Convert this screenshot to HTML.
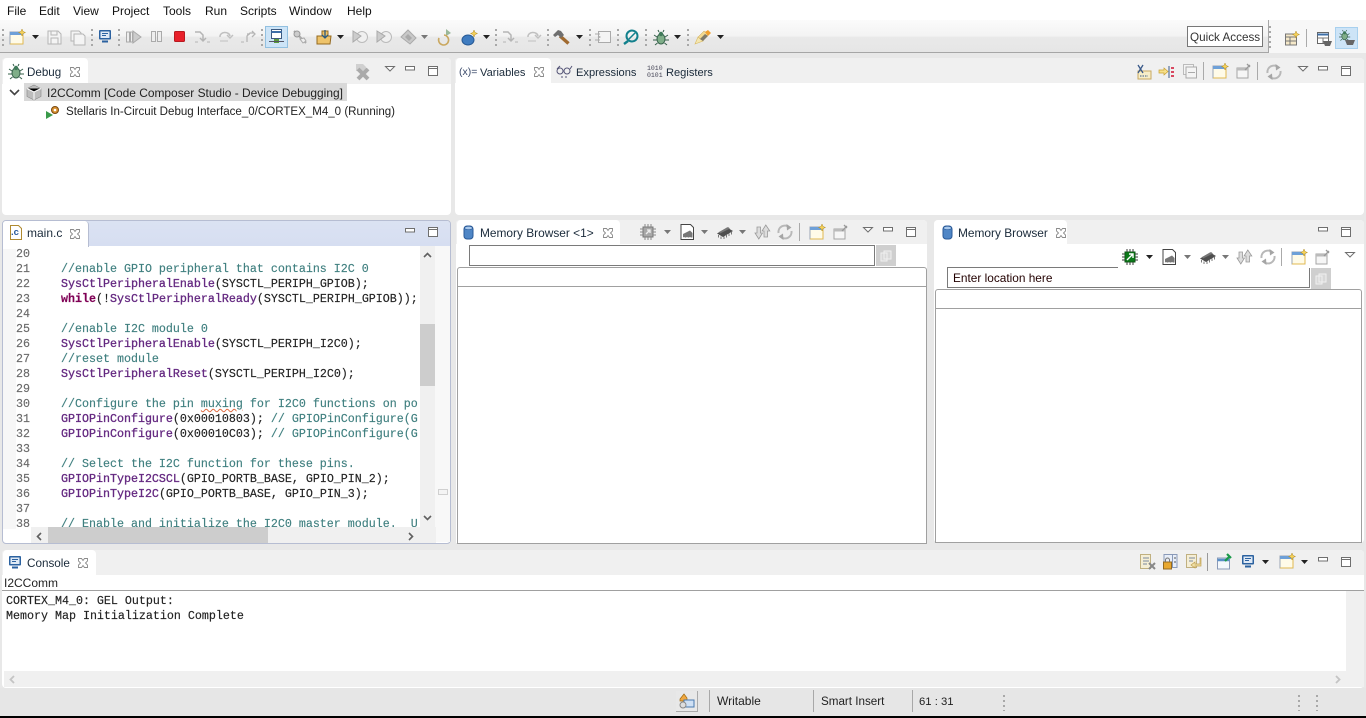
<!DOCTYPE html>
<html><head><meta charset="utf-8"><title>Code Composer Studio</title>
<style>
html,body{margin:0;padding:0}
body{width:1366px;height:718px;position:relative;overflow:hidden;background:#e8e8e8;font:12px/16px "Liberation Sans",sans-serif;color:#111}
.a,svg,.t{position:absolute}
.t{white-space:nowrap}
svg{overflow:visible}
.m{position:absolute;top:3px;font-size:12px;color:#111}
.grip{position:absolute;width:2px;background:repeating-linear-gradient(#a8a8a8 0 2px,transparent 2px 5px)}
.panel{position:absolute;background:#fff;border-radius:4px}
.hd{position:absolute;left:0;right:0;top:0;height:25px;background:#f0f0f0;border-radius:4px 4px 0 0}
.tab{position:absolute;top:0;height:26px;background:#fff;border-radius:4px 4px 0 0}
.code{position:absolute;font:11.67px/15px "Liberation Mono",monospace;white-space:pre;color:#222;-webkit-text-stroke:.15px currentColor}
.c{color:#3f7f7f}.f{color:#642880;-webkit-text-stroke:.3px #642880}.k{color:#7f0055;font-weight:bold}
.tb{font-size:11.1px;color:#1a2a3a}
</style></head><body>
<svg width="0" height="0" style="position:absolute"><defs>
<g id="x"><path d="M1.500 1.500l3 0 1.500 2 1.500-2 3 0 0 2.500-2 2 2 2 0 2.500-3 0-1.500-2-1.500 2-3 0 0-2.500 2-2-2-2z" fill="#fff" stroke="#8a8a8a" stroke-width=".9"/></g>
<g id="min"><rect x=".5" y=".5" width="9" height="3.500" fill="#fff" stroke="#6f6f6f"/></g>
<g id="max"><rect x=".5" y=".5" width="9" height="9" fill="#fff" stroke="#6f6f6f"/><path d="M.5 2.500h9" stroke="#6f6f6f"/></g>
<g id="menu"><path d="M.5.5h9l-4.500 4.500z" fill="#fff" stroke="#6f6f6f"/></g>
<g id="dd"><path d="M0 0h7l-3.500 4z" fill="#222"/></g>
<g id="ddg"><path d="M0 0h7l-3.500 4z" fill="#777"/></g>
<g id="mon"><rect x="1" y="1" width="12" height="9.500" rx="1" fill="#2c62a0"/><rect x="2.500" y="2.500" width="9" height="6.500" fill="#dfe9f5"/><path d="M4 4.500h6M4 6.500h4" stroke="#2c62a0"/><path d="M4 12.500h6" stroke="#2c62a0" stroke-width="2"/></g>
<g id="newv"><rect x="1" y="3" width="13" height="12" fill="#fffbe8" stroke="#9aa5b5"/><rect x="1" y="3" width="13" height="3" fill="#6ea0d8"/><path d="M14 15V6M1 15h13" stroke="#e0b850"/><path d="M13 0l1 2.500 2.500 1-2.500 1-1 2.500-1-2.500-2.500-1 2.500-1z" fill="#f7d35a" stroke="#b08a20" stroke-width=".5"/></g>
<g id="pin"><rect x="1" y="5" width="11" height="10" fill="#f6f6f6" stroke="#a5a5a5"/><rect x="1" y="5" width="11" height="2.500" fill="#bbb"/><path d="M9 7l5-5M11 1l3 3" stroke="#999" stroke-width="1.300"/></g>
<g id="sync"><path d="M1.500 9a6.500 6.500 0 0 1 10.500-6M14.500 7a6.500 6.500 0 0 1-10.500 6" fill="none" stroke="#b8b8b8" stroke-width="2"/><path d="M9.500 0l5 3.500-4.500 3zM6.500 16l-5-3.500 4.500-3z" fill="#a5a5a5"/></g>
<g id="updown"><path d="M3 9V3h3.500v6h2L4.800 15 1 9zM10 7v6h3.500V7h2.300L11.800 1 8 7z" fill="#ddd" stroke="#999" stroke-width=".8"/></g>
<g id="chip"><rect x="3" y="3" width="10" height="10" fill="#a8a8a8" stroke="#777"/><path d="M0 5h3M0 8h3M0 11h3M13 5h3M13 8h3M13 11h3M5 0v3M8 0v3M11 0v3M5 13v3M8 13v3M11 13v3" stroke="#888"/><path d="M6 10l4-4M7 6h3v3" stroke="#eee" fill="none" stroke-width="1.300"/></g>
<g id="chip2"><rect x="3" y="3" width="10" height="10" fill="#0c7a1a" stroke="#0a5a12"/><path d="M0 5h3M0 8h3M0 11h3M13 5h3M13 8h3M13 11h3M5 0v3M8 0v3M11 0v3M5 13v3M8 13v3M11 13v3" stroke="#3a3a3a"/><path d="M5 11l6-6M7 5h4v4" stroke="#fff" fill="none" stroke-width="1.400"/></g>
<g id="doc"><path d="M1 .5h9.500l3 3V15.500H1z" fill="#fff" stroke="#444"/><path d="M3 10l7-3.500 2.500 2.500v4.500H3z" fill="#777"/><path d="M4 13v2M7 13v2M10 13v2" stroke="#fff"/></g>
<g id="ram"><path d="M0 9.500l10-6 6 3.500-10 6z" fill="#4f4f4f"/><path d="M2 8l9-5 2 1.500-10 5z" fill="#777"/><path d="M1.500 11v2.500M4 12.500V15M7 12.500V15M9.500 11v2.500M12 9.500V12M14.500 8v2.500" stroke="#777"/></g>
<g id="bug"><ellipse cx="8" cy="9" rx="4" ry="5" fill="#7fae88" stroke="#35604a"/><circle cx="8" cy="4" r="2.200" fill="#3f7a5a"/><path d="M4 7L1 5M4 10H0M4.500 13L2 15M12 7l3-2M12 10h4M11.500 13l2.500 2M6 2L5 0M10 2l1-2" stroke="#35604a"/></g>
<g id="mem"><rect x="2" y="1" width="9" height="13" rx="3" fill="#4f86c6" stroke="#2a5a98"/><ellipse cx="6.500" cy="3" rx="4" ry="1.700" fill="#a8c8ec" stroke="#2a5a98" stroke-width=".6"/></g>
</defs></svg>

<!-- top -->
<div class="a" style="left:0;top:0;width:1366px;height:20px;background:#fff"></div>
<div class="m" style="left:7px">File</div><div class="m" style="left:39px">Edit</div><div class="m" style="left:73px">View</div><div class="m" style="left:112px">Project</div><div class="m" style="left:163px">Tools</div><div class="m" style="left:205px">Run</div><div class="m" style="left:240px">Scripts</div><div class="m" style="left:289px">Window</div><div class="m" style="left:347px">Help</div>
<div class="a" style="left:0;top:20px;width:1268px;height:32px;background:linear-gradient(#fbfbfb 0,#f3f3f3 50%,#e9e9e9 54%,#e6e6e6 100%)"></div>
<div class="a" style="left:0;top:52px;width:1268px;height:1px;background:#a6a6a6"></div>
<div class="a" style="left:1268px;top:20px;width:98px;height:33px;background:#f7f7f7"></div>
<div class="a" style="left:1268px;top:20px;width:1px;height:33px;background:#a6a6a6"></div>

<!-- toolbar icons -->
<div class="grip" style="left:2px;top:29px;height:17px"></div>
<svg style="left:9px;top:29px" width="18" height="17"><use href="#newv"/></svg><svg style="left:32px;top:35px" width="8" height="5"><use href="#dd"/></svg>
<svg style="left:47px;top:30px" width="15" height="15"><path d="M1 1h10l3 3v10H1z" fill="#f4f4f4" stroke="#b5b5b5"/><path d="M4 1v4h6V1M4 14V8h7v6" fill="none" stroke="#b5b5b5"/></svg>
<svg style="left:70px;top:30px" width="16" height="16"><path d="M1 1h8l2 2v8H1z" fill="#f4f4f4" stroke="#b5b5b5"/><path d="M4 4h9l2 2v9H4z" fill="#f4f4f4" stroke="#b5b5b5"/></svg>
<div class="grip" style="left:91px;top:29px;height:17px"></div>
<svg style="left:98px;top:29px" width="14" height="15"><use href="#mon"/></svg>
<div class="grip" style="left:118px;top:29px;height:17px"></div>
<svg style="left:126px;top:31px" width="16" height="13"><rect x=".5" y="1" width="3" height="10" fill="#eee" stroke="#aaa"/><rect x="4.500" y="1" width="2" height="10" fill="#eee" stroke="#aaa"/><path d="M7 0l8 6-8 6z" fill="#ccc" stroke="#aaa"/></svg>
<svg style="left:151px;top:31px" width="12" height="13"><rect x=".5" y=".5" width="4" height="10" fill="#eee" stroke="#aaa"/><rect x="6.500" y=".5" width="4" height="10" fill="#eee" stroke="#aaa"/></svg>
<svg style="left:174px;top:31px" width="12" height="13"><rect x=".5" y=".5" width="10" height="10" rx="1" fill="#e8202a" stroke="#b81a20"/></svg>
<svg style="left:195px;top:31px" width="16" height="13"><path d="M0 1h5l3 3v5M5 7l3 3 3-3" fill="none" stroke="#b5b5b5" stroke-width="1.500"/><path d="M0 11h3M12 11h3" stroke="#b5b5b5"/></svg>
<svg style="left:218px;top:31px" width="16" height="13"><path d="M2 6a5 4 0 0 1 10-1M9 4l3 3 3-3" fill="none" stroke="#c0c0c0" stroke-width="1.500"/><path d="M2 10h8" stroke="#c0c0c0"/></svg>
<svg style="left:241px;top:31px" width="16" height="13"><path d="M6 11V5l3-3h4M6 3l3 0M11 0l3 3-3 3" fill="none" stroke="#b5b5b5" stroke-width="1.300"/><path d="M0 11h3" stroke="#b5b5b5"/></svg>
<div class="grip" style="left:261px;top:29px;height:17px"></div>
<div class="a" style="left:265px;top:26px;width:21px;height:20px;background:#cde4f7;border:1px solid #92c0e0"></div>
<svg style="left:269px;top:29px" width="16" height="16"><rect x="2.500" y=".5" width="10" height="9" fill="#fff" stroke="#3d5a80"/><path d="M2.500 3h10" stroke="#3d6fa8" stroke-width="2"/><rect x="5" y="10" width="5" height="4" fill="#5a9a3a"/><path d="M0 12.500h15" stroke="#556"/></svg>
<svg style="left:292px;top:29px" width="16" height="16"><path d="M2 2l7 7M9 9l5 5" stroke="#aaa" stroke-width="2"/><circle cx="5" cy="5" r="3" fill="#ccc" stroke="#999"/><path d="M8 10l4-1 2 3-3 2z" fill="#eee" stroke="#aaa"/></svg>
<svg style="left:316px;top:29px" width="17" height="16"><path d="M1 7h5V2h6v5h3l-1 8H1z" fill="#eec36a" stroke="#946a20"/><path d="M9 1v8M6 6l3 3 3-3" stroke="#2a5a80" stroke-width="1.300" fill="none"/></svg>
<svg style="left:337px;top:35px" width="8" height="5"><use href="#dd"/></svg>
<svg style="left:352px;top:29px" width="16" height="16"><circle cx="10" cy="8" r="5.500" fill="#f0f0f0" stroke="#bbb"/><path d="M1 2l8 5-8 6z" fill="#ccc" stroke="#aaa"/></svg>
<svg style="left:376px;top:29px" width="16" height="16"><circle cx="10" cy="8" r="5.500" fill="#f0f0f0" stroke="#bbb"/><path d="M1 2l8 5-8 6z" fill="#ccc" stroke="#aaa"/></svg>
<svg style="left:400px;top:29px" width="17" height="16"><path d="M1 8l7-7 8 8-6 6z" fill="#c8c8c8" stroke="#aaa"/><path d="M5 8l3-3 4 4-3 3z" fill="#aaa"/></svg>
<svg style="left:421px;top:35px" width="8" height="5"><use href="#ddg"/></svg>
<svg style="left:437px;top:29px" width="16" height="16"><path d="M9 0l5 4-5 3z" fill="#9ab89a"/><path d="M2 9a5 5 0 1 0 5-3" fill="none" stroke="#caa860" stroke-width="1.600"/></svg>
<svg style="left:461px;top:30px" width="17" height="16"><ellipse cx="7" cy="10" rx="6" ry="5" fill="#3f7cc0" stroke="#275a95"/><path d="M13 0l1 2.500 2.500 1-2.500 1-1 2.500-1-2.500-2.500-1 2.500-1z" fill="#f7d35a" stroke="#b08a20" stroke-width=".5"/></svg>
<svg style="left:483px;top:35px" width="8" height="5"><use href="#dd"/></svg>
<div class="grip" style="left:495px;top:29px;height:17px"></div>
<svg style="left:503px;top:31px" width="16" height="13"><path d="M0 1h5l3 3v5M5 7l3 3 3-3" fill="none" stroke="#b5b5b5" stroke-width="1.500"/><path d="M0 11h3M12 11h3" stroke="#b5b5b5"/></svg>
<svg style="left:526px;top:31px" width="16" height="13"><path d="M2 6a5 4 0 0 1 10-1M9 4l3 3 3-3" fill="none" stroke="#c0c0c0" stroke-width="1.500"/><path d="M2 10h8" stroke="#c0c0c0"/></svg>
<div class="grip" style="left:547px;top:29px;height:17px"></div>
<svg style="left:553px;top:30px" width="17" height="15"><path d="M7 6l8.500 7.500" stroke="#a06a30" stroke-width="3.400"/><path d="M0 5l5-5 3 1 3 4-3 3-3-3-3 2z" fill="#6f6f6f"/></svg>
<svg style="left:576px;top:35px" width="8" height="5"><use href="#dd"/></svg>
<div class="grip" style="left:589px;top:29px;height:17px"></div>
<svg style="left:595px;top:31px" width="16" height="13"><rect x="3.500" y=".5" width="12" height="11" fill="#f4f4f4" stroke="#aaa"/><path d="M0 3h5M0 9h5M3 5l2 1-2 1" stroke="#aaa" fill="none"/></svg>
<div class="grip" style="left:617px;top:29px;height:17px"></div>
<svg style="left:623px;top:29px" width="16" height="16"><circle cx="9" cy="7" r="5.500" fill="none" stroke="#12808c" stroke-width="2"/><path d="M5 12l-4 3" stroke="#12808c" stroke-width="2.400"/><path d="M6 10l6-6" stroke="#12808c" stroke-width="1.500"/></svg>
<div class="grip" style="left:645px;top:29px;height:17px"></div>
<svg style="left:653px;top:30px" width="16" height="16"><use href="#bug"/></svg>
<svg style="left:674px;top:35px" width="8" height="5"><use href="#dd"/></svg>
<div class="grip" style="left:687px;top:29px;height:17px"></div>
<svg style="left:695px;top:30px" width="17" height="15"><path d="M0 14l3-7 5 4z" fill="#f5e7b0" stroke="#d8b860" stroke-width=".6"/><path d="M3 7l6-6 4 3-5 7z" fill="#f2d990" stroke="#c8a860" stroke-width=".5"/><path d="M5 9l5-5 3 2-5 5z" fill="#7f7a6a"/><path d="M10 2l3-2 3 3-3 3z" fill="#f0a030"/></svg>
<svg style="left:717px;top:35px" width="8" height="5"><use href="#dd"/></svg>

<div class="a" style="left:1187px;top:26px;width:74px;height:19px;border:1px solid #777;background:#fff;box-sizing:content-box"></div>
<div class="t" style="left:1190px;top:30px;color:#333;font-size:11.7px">Quick Access</div>
<div class="grip" style="left:1269px;top:26px;height:22px"></div>
<svg style="left:1285px;top:31px" width="16" height="15"><rect x=".5" y="3" width="11" height="11" fill="#f5e8c8" stroke="#777"/><path d="M.5 6h11M.5 10h11M5 6v8" stroke="#777"/><path d="M11 0l1 2.500 2.500 1-2.500 1-1 2.500-1-2.500-2.500-1 2.500-1z" fill="#f7d35a" stroke="#b08a20" stroke-width=".5"/></svg>
<div class="a" style="left:1306px;top:29px;width:1px;height:18px;background:#aaa"></div>
<svg style="left:1317px;top:32px" width="16" height="15"><rect x=".5" y=".5" width="11" height="11" fill="#fff" stroke="#666"/><path d="M.5 2.500h11" stroke="#3d6fa8" stroke-width="2"/><path d="M.5 6h11M6 6v5" stroke="#777"/><path d="M6 9h9l-2 5H8z" fill="#666"/></svg>
<div class="a" style="left:1335px;top:27px;width:21px;height:20px;background:#cde4f7;border:1px solid #a8d0ee"></div>
<svg style="left:1339px;top:30px" width="18" height="17"><g transform="scale(.7)"><use href="#bug"/></g><path d="M6 10h10l-2 5H8z" fill="#666"/></svg>

<!-- Debug panel -->
<div class="panel" style="left:2px;top:58px;width:449px;height:157px;border-radius:4px"><div class="hd" style="height:26px"></div>
<div class="tab" style="left:1px;width:85px;height:27px"></div></div>
<svg style="left:8px;top:64px" width="16" height="16"><use href="#bug"/></svg>
<div class="t" style="left:27px;top:65px;color:#1a2a3a;font-size:11.6px">Debug</div>
<svg style="left:69px;top:66px" width="12" height="12"><use href="#x"/></svg>
<svg style="left:354px;top:63px" width="17" height="17"><path d="M2 1h7l3 3v4H2z" fill="#d0d0d0"/><path d="M4 6l10 10M14 6L4 16" stroke="#aaa" stroke-width="4"/></svg>
<svg style="left:385px;top:66px" width="10" height="6"><use href="#menu"/></svg>
<svg style="left:405px;top:66px" width="11" height="5"><use href="#min"/></svg>
<svg style="left:428px;top:66px" width="11" height="11"><use href="#max"/></svg>
<div class="a" style="left:24px;top:83px;width:323px;height:18px;background:#d9d9d9"></div>
<svg style="left:9px;top:89px" width="11" height="7"><path d="M1 1l4.500 4.500L10 1" fill="none" stroke="#444" stroke-width="1.600"/></svg>
<svg style="left:26px;top:85px" width="16" height="15"><path d="M8 0l7 3.500v8L8 15l-7-3.500v-8z" fill="#bdbdbd" stroke="#888" stroke-width=".6"/><path d="M1 3.500L8 7l7-3.500M8 7v8" stroke="#fff"/></svg>
<div class="t" style="left:47px;top:85px;font-size:11.95px;color:#222">I2CComm [Code Composer Studio - Device Debugging]</div>
<svg style="left:46px;top:105px" width="16" height="15"><path d="M0 6l7 4-7 4z" fill="#3a9a4a"/><circle cx="9" cy="5" r="3.500" fill="#d89030" stroke="#7a4a10"/><circle cx="9" cy="5" r="1.300" fill="#fff"/></svg>
<div class="t" style="left:66px;top:104px;font-size:11.55px;color:#222">Stellaris In-Circuit Debug Interface_0/CORTEX_M4_0 (Running)</div>

<!-- Variables panel -->
<div class="panel" style="left:455px;top:58px;width:909px;height:157px"><div class="hd" style="height:25px"></div>
<div class="tab" style="left:1px;width:95px"></div></div>
<div class="t" style="left:459px;top:64px;font-size:10.5px;color:#3a4a6a">(x)=</div>
<div class="t tb" style="left:480px;top:65px">Variables</div>
<svg style="left:533px;top:66px" width="12" height="12"><use href="#x"/></svg>
<svg style="left:556px;top:64px" width="16" height="16"><circle cx="4" cy="7" r="3" fill="none" stroke="#557"/><circle cx="11" cy="7" r="3" fill="none" stroke="#557"/><path d="M7 7h1M14 5l2-3M1 5l3-3" stroke="#557"/><path d="M5 13h2M9 13h2" stroke="#557"/></svg>
<div class="t tb" style="left:576px;top:65px">Expressions</div>
<div class="t" style="left:647px;top:66px;font:6.5px/6.5px 'Liberation Mono',monospace;color:#445;white-space:normal;width:16px">1010 0101</div>
<div class="t tb" style="left:666px;top:65px">Registers</div>
<svg style="left:1135px;top:64px" width="17" height="16"><path d="M3 7h13v8H3z" fill="#f7eec8" stroke="#c8a860"/><path d="M3 1l5 8M8 1L3 9" stroke="#3a5a8a" stroke-width="1.300"/><path d="M5 12h8" stroke="#3a5a8a" stroke-dasharray="1.500 1"/></svg>
<svg style="left:1158px;top:64px" width="17" height="16"><path d="M1 6h5V4l4 3.500-4 3.500V9H1z" fill="#f7e08a" stroke="#c8a030" stroke-width=".7"/><path d="M11 2v12" stroke="#3a5a8a"/><path d="M13 4h3M13 8h3M13 12h3" stroke="#d84860" stroke-width="2"/></svg>
<svg style="left:1183px;top:64px" width="14" height="15"><rect x=".5" y=".5" width="10" height="10" fill="#f4f4f4" stroke="#bbb"/><rect x="3" y="3" width="10.500" height="11" fill="#f4f4f4" stroke="#aaa"/><path d="M5 8.500h7" stroke="#aaa"/></svg>
<div class="a" style="left:1203px;top:62px;width:1px;height:18px;background:#aaa"></div>
<svg style="left:1212px;top:63px" width="17" height="17"><use href="#newv"/></svg>
<svg style="left:1236px;top:63px" width="16" height="16"><use href="#pin"/></svg>
<div class="a" style="left:1257px;top:62px;width:1px;height:18px;background:#aaa"></div>
<svg style="left:1266px;top:64px" width="16" height="16"><use href="#sync"/></svg>
<svg style="left:1298px;top:66px" width="10" height="6"><use href="#menu"/></svg>
<svg style="left:1318px;top:66px" width="11" height="5"><use href="#min"/></svg>
<svg style="left:1341px;top:66px" width="11" height="11"><use href="#max"/></svg>

<!-- main.c -->
<div class="panel" style="left:2px;top:220px;width:447px;height:322px;border:1px solid #b6bdd2;border-radius:4px;overflow:hidden">
<div class="a" style="left:0;top:0;width:447px;height:25px;background:linear-gradient(#dbe2f2,#d6def1)"></div>
<div class="a" style="left:86px;top:25px;width:361px;height:4px;background:#fff"></div>
<div class="a" style="left:0;top:0;width:85px;height:26px;background:#fff;border-radius:0 4px 0 0;border-right:1px solid #b6bdd2"></div>
<div class="a" style="left:0;top:28px;width:13px;height:280px;background:#f7f7f7"></div>
</div>
<svg style="left:10px;top:225px" width="12" height="15"><path d="M.5.5h8l3 3v11h-11z" fill="#fff" stroke="#b08a30"/></svg>
<div class="t" style="left:11px;top:227px;font:bold 9.5px/12px 'Liberation Sans',sans-serif;color:#2a5a9a">.c</div>
<div class="t" style="left:27px;top:225px;font-size:12px;color:#1a2a3a">main.c</div>
<svg style="left:69px;top:228px" width="12" height="12"><use href="#x"/></svg>
<svg style="left:405px;top:228px" width="11" height="5"><use href="#min"/></svg>
<svg style="left:428px;top:227px" width="11" height="11"><use href="#max"/></svg>
<div class="a" style="left:16px;top:246px;width:404px;height:281px;overflow:hidden">
<div class="code" style="left:0;top:1px;color:#6a6a6a">20
21
22
23
24
25
26
27
28
29
30
31
32
33
34
35
36
37
38</div>
<div class="code" style="left:45px;top:1px;width:360px;overflow:hidden">
<span class="c">//enable GPIO peripheral that contains I2C 0</span>
<span class="f">SysCtlPeripheralEnable</span>(SYSCTL_PERIPH_GPIOB);
<span class="k">while</span>(!<span class="f">SysCtlPeripheralReady</span>(SYSCTL_PERIPH_GPIOB));

<span class="c">//enable I2C module 0</span>
<span class="f">SysCtlPeripheralEnable</span>(SYSCTL_PERIPH_I2C0);
<span class="c">//reset module</span>
<span class="f">SysCtlPeripheralReset</span>(SYSCTL_PERIPH_I2C0);

<span class="c">//Configure the pin <span style="text-decoration:underline wavy #e06a40 1px">muxing</span> for I2C0 functions on po</span>
<span class="f">GPIOPinConfigure</span>(0x00010803); <span class="c">// GPIOPinConfigure(G</span>
<span class="f">GPIOPinConfigure</span>(0x00010C03); <span class="c">// GPIOPinConfigure(G</span>

<span class="c">// Select the I2C function for these pins.</span>
<span class="f">GPIOPinTypeI2CSCL</span>(GPIO_PORTB_BASE, GPIO_PIN_2);
<span class="f">GPIOPinTypeI2C</span>(GPIO_PORTB_BASE, GPIO_PIN_3);

<span class="c">// Enable and initialize the I2C0 master module.  U</span></div>
</div>
<div class="a" style="left:420px;top:246px;width:15px;height:281px;background:#f0f0f0"></div>
<div class="a" style="left:420px;top:324px;width:15px;height:62px;background:#cdcdcd"></div>
<div class="a" style="left:435px;top:246px;width:15px;height:296px;background:#f8f8f8"></div>
<svg style="left:423px;top:252px" width="9" height="6"><path d="M1 5l3.500-3.500L8 5" fill="none" stroke="#606060" stroke-width="1.600"/></svg>
<svg style="left:423px;top:515px" width="9" height="6"><path d="M1 1l3.500 3.500L8 1" fill="none" stroke="#606060" stroke-width="1.600"/></svg>
<div class="a" style="left:438px;top:489px;width:8px;height:4px;border:1px solid #d0d0d0;background:#f4f4f4"></div>
<div class="a" style="left:31px;top:527px;width:405px;height:16px;background:#f0f0f0"></div>
<div class="a" style="left:48px;top:527px;width:220px;height:16px;background:#cdcdcd"></div>
<svg style="left:36px;top:532px" width="6" height="9"><path d="M5 1L1.500 4.500 5 8" fill="none" stroke="#606060" stroke-width="1.600"/></svg>
<svg style="left:408px;top:532px" width="6" height="9"><path d="M1 1l3.500 3.500L1 8" fill="none" stroke="#606060" stroke-width="1.600"/></svg>

<!-- Memory 1 -->
<div class="panel" style="left:456px;top:220px;width:471px;height:323px;border-radius:4px 4px 0 0"><div class="hd" style="height:24px"></div>
<div class="tab" style="left:1px;width:163px;height:25px"></div></div>
<svg style="left:462px;top:225px" width="13" height="15"><use href="#mem"/></svg>
<div class="t tb" style="left:480px;top:225px;font-size:11.9px">Memory Browser &lt;1&gt;</div>
<svg style="left:602px;top:227px" width="12" height="12"><use href="#x"/></svg>
<svg style="left:640px;top:224px" width="16" height="16"><use href="#chip"/></svg>
<svg style="left:664px;top:230px" width="8" height="5"><use href="#ddg"/></svg>
<svg style="left:680px;top:224px" width="15" height="16"><use href="#doc"/></svg>
<svg style="left:701px;top:230px" width="8" height="5"><use href="#ddg"/></svg>
<svg style="left:717px;top:224px" width="16" height="16"><use href="#ram"/></svg>
<svg style="left:739px;top:230px" width="8" height="5"><use href="#ddg"/></svg>
<svg style="left:754px;top:224px" width="16" height="16"><use href="#updown"/></svg>
<svg style="left:777px;top:224px" width="16" height="16"><use href="#sync"/></svg>
<div class="a" style="left:799px;top:223px;width:1px;height:18px;background:#aaa"></div>
<svg style="left:809px;top:224px" width="17" height="17"><use href="#newv"/></svg>
<svg style="left:833px;top:224px" width="16" height="16"><use href="#pin"/></svg>
<svg style="left:863px;top:227px" width="10" height="6"><use href="#menu"/></svg>
<svg style="left:883px;top:227px" width="11" height="5"><use href="#min"/></svg>
<svg style="left:906px;top:227px" width="11" height="11"><use href="#max"/></svg>
<div class="a" style="left:469px;top:245px;width:404px;height:19px;border:1px solid #7a7a7a;background:#fff"></div>
<div class="a" style="left:876px;top:245px;width:20px;height:21px;background:#cfcfcf"></div>
<svg style="left:880px;top:250px" width="12" height="12"><path d="M4 1h7v8H4zM1 3h6v8H1z" fill="#d8d8d8" stroke="#f0f0f0"/></svg>
<div class="a" style="left:457px;top:267px;width:468px;height:275px;border:1px solid #a0a0a0;border-radius:3px 3px 0 0;background:#fff"></div>
<div class="a" style="left:458px;top:286px;width:468px;height:1px;background:#a0a0a0"></div>

<!-- Memory 2 -->
<div class="panel" style="left:934px;top:220px;width:430px;height:323px"><div class="hd" style="height:24px"></div>
<div class="tab" style="left:0;width:133px;height:25px"></div></div>
<svg style="left:941px;top:225px" width="13" height="15"><use href="#mem"/></svg>
<div class="t tb" style="left:958px;top:225px;font-size:11.9px">Memory Browser</div>
<svg style="left:1055px;top:227px" width="12" height="12"><use href="#x"/></svg>
<svg style="left:1318px;top:227px" width="11" height="5"><use href="#min"/></svg>
<svg style="left:1341px;top:227px" width="11" height="11"><use href="#max"/></svg>
<svg style="left:1122px;top:249px" width="16" height="16"><use href="#chip2"/></svg>
<svg style="left:1146px;top:255px" width="8" height="5"><use href="#dd"/></svg>
<svg style="left:1162px;top:249px" width="15" height="16"><use href="#doc"/></svg>
<svg style="left:1184px;top:255px" width="8" height="5"><use href="#ddg"/></svg>
<svg style="left:1200px;top:249px" width="16" height="16"><use href="#ram"/></svg>
<svg style="left:1222px;top:255px" width="8" height="5"><use href="#ddg"/></svg>
<svg style="left:1236px;top:249px" width="16" height="16"><use href="#updown"/></svg>
<svg style="left:1260px;top:249px" width="16" height="16"><use href="#sync"/></svg>
<div class="a" style="left:1281px;top:248px;width:1px;height:18px;background:#aaa"></div>
<svg style="left:1291px;top:249px" width="17" height="17"><use href="#newv"/></svg>
<svg style="left:1315px;top:249px" width="16" height="16"><use href="#pin"/></svg>
<svg style="left:1345px;top:252px" width="10" height="6"><use href="#menu"/></svg>
<div class="a" style="left:947px;top:267px;width:171px;height:1px;background:#7a7a7a"></div>
<div class="a" style="left:947px;top:267px;width:1px;height:21px;background:#7a7a7a"></div>
<div class="a" style="left:1309px;top:268px;width:1px;height:20px;background:#7a7a7a"></div>
<div class="a" style="left:947px;top:287px;width:363px;height:1px;background:#7a7a7a"></div>
<div class="t" style="left:953px;top:270px;font-size:11.85px;color:#200">Enter location here</div>
<div class="a" style="left:1311px;top:268px;width:20px;height:21px;background:#cfcfcf"></div>
<svg style="left:1315px;top:273px" width="12" height="12"><path d="M4 1h7v8H4zM1 3h6v8H1z" fill="#d8d8d8" stroke="#f0f0f0"/></svg>
<div class="a" style="left:935px;top:289px;width:425px;height:252px;border:1px solid #a0a0a0;border-radius:3px 3px 0 0;background:#fff"></div>
<div class="a" style="left:936px;top:308px;width:425px;height:1px;background:#a0a0a0"></div>

<!-- Console -->
<div class="panel" style="left:2px;top:550px;width:1362px;height:138px"><div class="hd" style="height:25px"></div>
<div class="tab" style="left:1px;width:93px"></div></div>
<svg style="left:8px;top:555px" width="15" height="15"><use href="#mon"/></svg>
<div class="t tb" style="left:27px;top:556px;font-size:11.7px">Console</div>
<svg style="left:77px;top:557px" width="12" height="12"><use href="#x"/></svg>
<svg style="left:1140px;top:554px" width="16" height="16"><path d="M.5.5h10v14H.5z" fill="#f5eed5" stroke="#c0b080"/><path d="M3 4h6M3 7h6M3 10h4" stroke="#7a8aa0"/><path d="M9 9l6 6M15 9l-6 6" stroke="#888" stroke-width="2"/></svg>
<svg style="left:1163px;top:554px" width="16" height="16"><rect x="1" y=".5" width="13" height="13" fill="#e8eef8" stroke="#8a9ab8"/><path d="M9.500 1v12" stroke="#8a9ab8"/><path d="M11 4h2M11 8h2" stroke="#555"/><rect x=".5" y="8" width="8" height="7" fill="#e8a830" stroke="#946a20"/><path d="M2.500 8V6a2 2 0 0 1 4 0v2" fill="none" stroke="#777"/></svg>
<svg style="left:1186px;top:554px" width="16" height="16"><path d="M.5.5h10v13H.5z" fill="#f5eed5" stroke="#c0b080"/><path d="M3 4h6M3 7h4" stroke="#7a8aa0"/><path d="M14 4v6H9V8l-4 3 4 3v-2h6V4z" fill="#f0e0a8" stroke="#c0a050" stroke-width=".7"/></svg>
<div class="a" style="left:1207px;top:553px;width:1px;height:18px;background:#999"></div>
<svg style="left:1217px;top:554px" width="17" height="16"><rect x=".5" y="4" width="12" height="11" fill="#f4f8fc" stroke="#8a9ab8"/><path d="M.5 6h12" stroke="#5a90c8" stroke-width="2.500"/><path d="M8 7l5-5M10 0l4 4" stroke="#1a9a4a" stroke-width="2.200"/></svg>
<svg style="left:1241px;top:554px" width="15" height="15"><use href="#mon"/></svg>
<svg style="left:1262px;top:560px" width="8" height="5"><use href="#dd"/></svg>
<svg style="left:1279px;top:553px" width="17" height="17"><use href="#newv"/></svg>
<svg style="left:1301px;top:560px" width="8" height="5"><use href="#dd"/></svg>
<svg style="left:1318px;top:557px" width="11" height="5"><use href="#min"/></svg>
<svg style="left:1341px;top:557px" width="11" height="11"><use href="#max"/></svg>
<div class="t" style="left:4px;top:575px;font-size:12px;color:#222">I2CComm</div>
<div class="a" style="left:2px;top:590px;width:1362px;height:1px;background:#a0a0a0"></div>
<div class="code" style="left:6px;top:594px;color:#222">CORTEX_M4_0: GEL Output:
Memory Map Initialization Complete</div>
<div class="a" style="left:1346px;top:591px;width:18px;height:96px;background:#f0f0f0"></div>
<div class="a" style="left:4px;top:671px;width:1342px;height:16px;background:#f0f0f0"></div>
<svg style="left:9px;top:675px" width="7" height="9"><path d="M5 1L1.500 4.500 5 8" fill="none" stroke="#c4c4c4" stroke-width="1.800"/></svg>
<svg style="left:1335px;top:675px" width="7" height="9"><path d="M1 1l3.500 3.500L1 8" fill="none" stroke="#c4c4c4" stroke-width="1.800"/></svg>

<!-- Status -->
<div class="a" style="left:0;top:688px;width:1366px;height:28px;background:#e6e6e6"></div>
<div class="a" style="left:0;top:716px;width:1366px;height:2px;background:#000"></div>
<div class="a" style="left:676px;top:691px;border-right:1px solid #aaa;border-bottom:1px solid #aaa;box-sizing:border-box;background:#e8e8e8;width:22px;height:21px"></div>
<svg style="left:679px;top:693px" width="16" height="16"><path d="M1 6l4-5 3 4v3H1z" fill="#f0a840" stroke="#a06a10" stroke-width=".7"/><rect x="5" y="7" width="10" height="7" fill="#cfe0f4" stroke="#4a7ab0"/><circle cx="4" cy="12" r="3" fill="#ddd" stroke="#888"/></svg>
<div class="a" style="left:709px;top:690px;width:1px;height:22px;background:#a8a8a8"></div>
<div class="t" style="left:717px;top:693px;font-size:12px;color:#222">Writable</div>
<div class="a" style="left:813px;top:690px;width:1px;height:22px;background:#a8a8a8"></div>
<div class="t" style="left:821px;top:694px;font-size:11.65px;color:#222">Smart Insert</div>
<div class="a" style="left:912px;top:690px;width:1px;height:22px;background:#a8a8a8"></div>
<div class="t" style="left:919px;top:694px;font-size:11.3px;color:#222">61 : 31</div>
<div class="grip" style="left:1003px;top:695px;height:16px"></div>
<div class="grip" style="left:1298px;top:695px;height:16px"></div>
<div class="grip" style="left:1316px;top:695px;height:16px"></div>
</body></html>
